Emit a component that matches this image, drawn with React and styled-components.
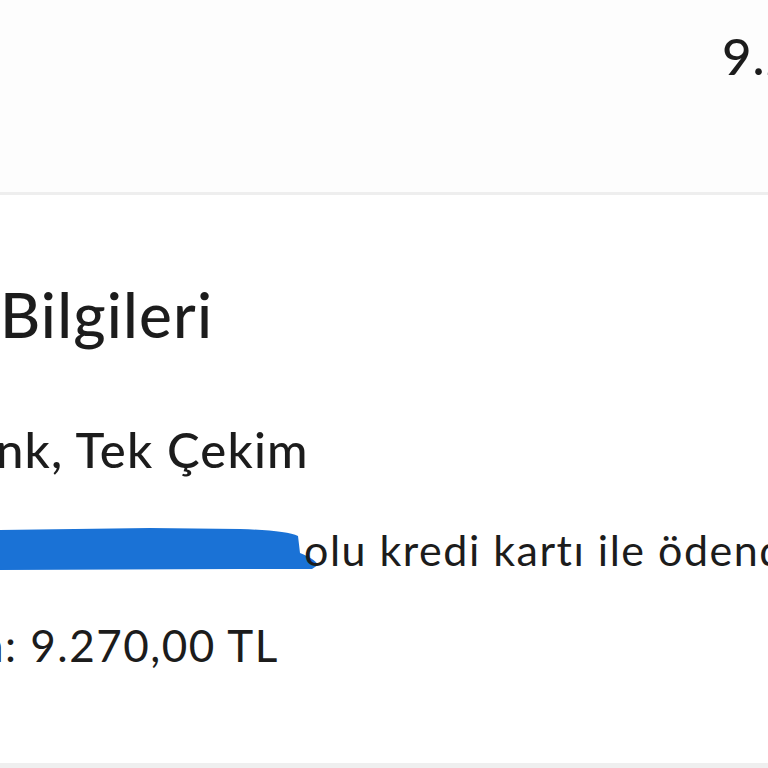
import React from "react";
import styled, { createGlobalStyle } from "styled-components";

const Global = createGlobalStyle`
  html, body { margin: 0; padding: 0; background: #fefefe; }
  body { width: 768px; height: 768px; overflow: hidden; font-family: Lato, "Noto Sans", sans-serif; color: #1c1c1c; }
`;

const Page = styled.div`
  width: 768px;
  height: 768px;
  display: flex;
  flex-direction: column;
  overflow: hidden;
`;

const SummaryBar = styled.div`
  height: 195px;
  display: flex;
  align-items: flex-start;
  padding-left: 722px;
  padding-top: 25px;
  box-sizing: border-box;
  border-bottom: 3px solid #eeeeee;
  background: #fdfdfd;
  white-space: nowrap;
`;

const Total = styled.span`
  font-size: 51px;
  font-weight: 500;
  letter-spacing: 1px;
`;

const Section = styled.section`
  flex: 1;
  display: flex;
  flex-direction: column;
  padding-top: 88px;
  background: #ffffff;
  border-bottom: 5px solid #efefef;
  white-space: nowrap;
`;

const Title = styled.h2`
  margin: 0;
  font-size: 62px;
  font-weight: 500;
  line-height: 1;
  letter-spacing: 1.2px;
`;

const Line = styled.div`
  margin-top: ${(p) => p.$gap}px;
  font-size: ${(p) => p.$size}px;
  font-weight: ${(p) => p.$weight || 400};
  letter-spacing: ${(p) => p.$spacing || 0}px;
  line-height: 1;
  text-indent: ${(p) => p.$indent || 0}px;
  display: flex;
  align-items: center;
`;

const Redaction = styled.svg`
  flex: none;
  margin-right: -14px;
`;

export default function App() {
  return (
    <>
      <Global />
      <Page>
        <SummaryBar>
          <Total>9.270,00 TL</Total>
        </SummaryBar>
        <Section>
          <Title>Bilgileri</Title>
          <Line $gap={80} $size={49} $weight={500} $spacing={1.2} $indent={-4}>nk, Tek Çekim</Line>
          <Line $gap={53} $size={43} $spacing={1.5}>
            <Redaction width="318" height="44" viewBox="0 0 318 44">
              <path d="M0 3 L150 1 L240 2 C270 3 290 5 298 9 L300 26 C310 30 316 34 318 38 L312 42 L240 42 L0 43 Z" fill="#1a72d6" />
            </Redaction>
            <span>olu kredi kartı ile ödendi</span>
          </Line>
          <Line $gap={52} $size={44} $spacing={1.5} $indent={-21}>n: 9.270,00 TL</Line>
        </Section>
      </Page>
    </>
  );
}
